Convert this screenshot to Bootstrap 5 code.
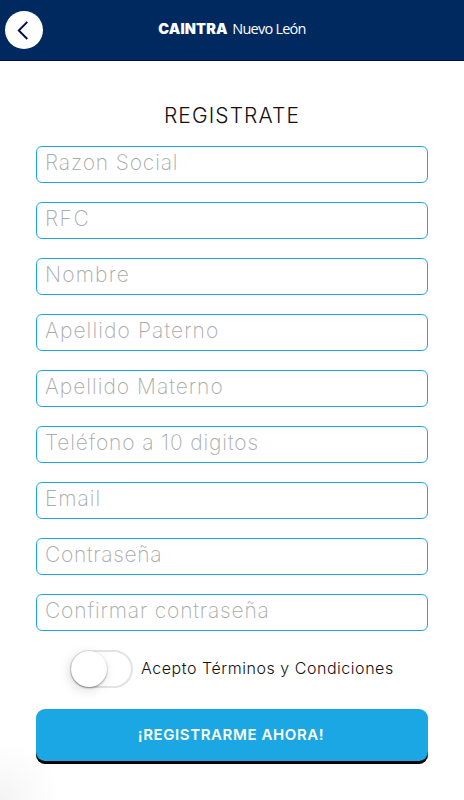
<!DOCTYPE html>
<html lang="es">
<head>
<meta charset="utf-8">
<meta name="viewport" content="width=device-width, initial-scale=1">
<title>Caintra Nuevo León</title>
<link href="https://cdn.jsdelivr.net/npm/bootstrap@5.3.0/dist/css/bootstrap.min.css" rel="stylesheet">
<style>
body{font-family:Inter,sans-serif;min-height:800px;color:#111;background:radial-gradient(circle at 0 800px,#f3f3f3 0,#fbfbfb 35px,#fff 60px) #fff}
.topbar{height:61px;background:#00295f;border-bottom:1px solid #000a5c;display:grid!important;grid-template-columns:48px 1fr 48px;padding:0}
.back{width:38px;height:38px;margin-left:5px;background:#fff}
.brand{color:#fff;line-height:20px;margin-top:-4px}
.brand b{font:900 14.5px/20px Inter,sans-serif;letter-spacing:.15px}
.brand span{font:400 14.5px/20px "Open Sans",sans-serif;letter-spacing:-.75px}
.signup{padding:42px 36px 0}
.title{font-size:21px;font-weight:300;line-height:26px;margin-bottom:17px;letter-spacing:1.1px}
.fields{gap:19px}
.signup .form-control{height:37px;border:1px solid #1ba7e3;border-radius:6px;padding:0 8px 4px;font-size:21px;font-weight:200;line-height:30px;letter-spacing:.85px}
.signup .form-control::placeholder{color:#aaa}
.signup .f2{letter-spacing:1.5px}
.signup .f3{letter-spacing:1.15px}
.signup .f4{letter-spacing:1.1px}
.signup .f5{letter-spacing:1px}
.signup .f7{letter-spacing:.95px}
.signup .f8{letter-spacing:.7px}
.terms{height:38px;margin-top:19px;padding-left:34px}
.toggle{appearance:none;width:63px;height:38px;border:2px solid #e3e3e3;border-radius:19px;background:#fff;margin:0;flex:none;display:flex}
.toggle::before{content:"";width:36px;height:36px;margin:-1px 0 0 -1px;border-radius:50%;background:#fff;box-shadow:0 1px 2px #0006,-2px 3px 12px #0002}
.terms label{font-size:16px;font-weight:300;letter-spacing:.54px;margin-left:8px;line-height:22px;margin-top:-3px;white-space:nowrap}
.signup .submit{height:52px;margin-top:21px;border:0;border-radius:9px;background:#1ba7e3;color:#fff;box-shadow:0 3px 0 #000;font-size:15px;font-weight:600;letter-spacing:.6px;padding:0 2px 0 0}
</style>
</head>
<body>
<nav class="navbar topbar align-items-center">
<button class="btn back rounded-circle p-0 d-flex align-items-center justify-content-center" aria-label="Regresar"><svg width="38" height="38" viewBox="0 0 38 38" fill="none" stroke="#00094f" stroke-width="2"><path d="M22.5 10.5 13.5 19.5l9 9"/></svg></button>
<div class="brand text-center text-nowrap"><b>CAINTRA</b> <span>Nuevo León</span></div>
</nav>
<main>
<form class="signup">
<h1 class="title text-center">REGISTRATE</h1>
<div class="fields d-flex flex-column">
<input class="form-control f1" placeholder="Razon Social">
<input class="form-control f2" placeholder="RFC">
<input class="form-control f3" placeholder="Nombre">
<input class="form-control f4" placeholder="Apellido Paterno">
<input class="form-control f5" placeholder="Apellido Materno">
<input class="form-control f6" type="tel" placeholder="Teléfono a 10 digitos">
<input class="form-control f7" type="email" placeholder="Email">
<input class="form-control f8" type="password" placeholder="Contraseña">
<input class="form-control f9" type="password" placeholder="Confirmar contraseña">
</div>
<div class="terms d-flex align-items-center"><input class="toggle" type="checkbox" role="switch" id="terms"><label for="terms">Acepto Términos y Condiciones</label></div>
<button class="btn submit w-100" type="button">¡REGISTRARME AHORA!</button>
</form>
</main>
<script src="https://cdn.jsdelivr.net/npm/bootstrap@5.3.0/dist/js/bootstrap.bundle.min.js"></script>
</body>
</html>
